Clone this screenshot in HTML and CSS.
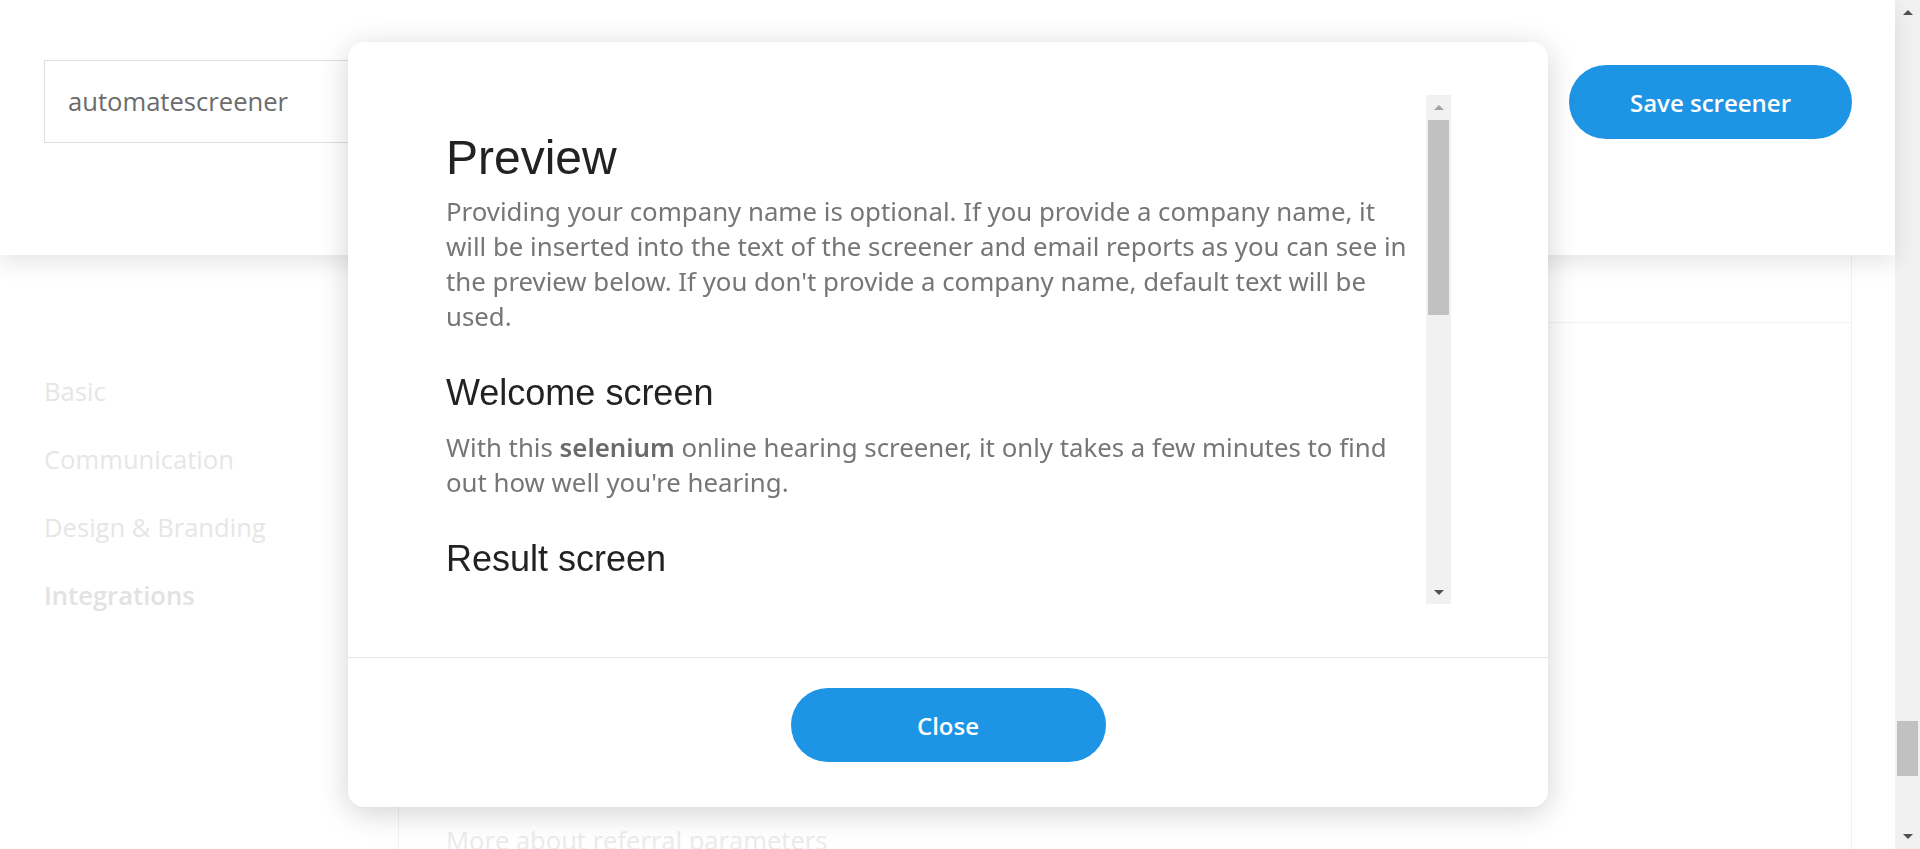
FILE: index.html
```html
<!DOCTYPE html>
<html lang="en">
<head>
<meta charset="utf-8">
<title>Screener settings</title>
<link rel="stylesheet" href="styles.css">
</head>
<body>
<div class="page">
  <div class="main">
    <header class="topbar">
      <div class="name-input">automatescreener</div>
      <button class="btn btn-save" type="button">Save screener</button>
    </header>
    <div class="content">
      <nav class="sidenav">
        <a class="nav-item">Basic</a>
        <a class="nav-item">Communication</a>
        <a class="nav-item">Design &amp; Branding</a>
        <a class="nav-item active">Integrations</a>
      </nav>
      <section class="card">
        <div class="card-head"></div>
        <div class="card-body">
          <a class="more-link">More about referral parameters</a>
        </div>
      </section>
    </div>
  </div>
  <div class="page-scrollbar">
    <div class="sb-btn"><span class="tri-up dark"></span></div>
    <div class="sb-track"><div class="page-thumb"></div></div>
    <div class="sb-btn"><span class="tri-down dark"></span></div>
  </div>
</div>

<div class="modal">
  <div class="modal-body">
    <div class="scroll-box">
      <div class="scroll-content">
        <h1 class="title">Preview</h1>
        <p class="text">Providing your company name is optional. If you provide a company name, it<br>will be inserted into the text of the screener and email reports as you can see in<br>the preview below. If you don't provide a company name, default text will be<br>used.</p>
        <h2 class="subtitle">Welcome screen</h2>
        <p class="text">With this <strong>selenium</strong> online hearing screener, it only takes a few minutes to find<br>out how well you're hearing.</p>
        <h2 class="subtitle">Result screen</h2>
      </div>
      <div class="modal-scrollbar">
        <div class="msb-btn"><span class="tri-up light"></span></div>
        <div class="msb-track"><div class="modal-thumb"></div></div>
        <div class="msb-btn"><span class="tri-down dark"></span></div>
      </div>
    </div>
  </div>
  <div class="modal-footer">
    <button class="btn btn-close" type="button">Close</button>
  </div>
</div>
</body>
</html>
```

FILE: styles.css
```css
html, body {
  margin: 0;
  height: 100%;
  overflow: hidden;
  background: #ffffff;
  font-family: "Open Sans", "Noto Sans", sans-serif;
}

.page {
  display: flex;
  height: 849px;
}

.main {
  flex: 1;
  display: flex;
  flex-direction: column;
  min-width: 0;
}

/* ---------- header ---------- */
.topbar {
  position: relative;
  z-index: 1;
  height: 255px;
  box-sizing: border-box;
  display: flex;
  align-items: flex-start;
  gap: 60px;
  padding: 60px 43px 0 44px;
  background: #ffffff;
  box-shadow: 0 8px 22px rgba(0, 0, 0, 0.10);
}

.name-input {
  flex: 1;
  height: 83px;
  box-sizing: border-box;
  display: flex;
  align-items: center;
  padding: 0 23px;
  border: 1px solid #dddddd;
  font-size: 25.6px;
  color: #6b6b6b;
}

.btn {
  border: 0;
  border-radius: 40px;
  background: #1e94e5;
  color: #ffffff;
  font-family: "Open Sans", "Noto Sans", sans-serif;
  font-weight: 600;
  font-size: 24px;
  cursor: pointer;
}

.btn-save {
  width: 283px;
  height: 74px;
  margin-top: 5px;
}

/* ---------- content ---------- */
.content {
  flex: 1;
  display: flex;
  min-height: 0;
}

.sidenav {
  width: 398px;
  flex: none;
  box-sizing: border-box;
  padding: 120px 0 0 44px;
  display: flex;
  flex-direction: column;
  gap: 34px;
}

.nav-item {
  font-size: 25.6px;
  line-height: 34px;
  color: #e6e6e6;
}

.nav-item.active {
  font-weight: 600;
  color: #e2e2e2;
}

.card {
  flex: 1;
  margin-right: 43px;
  border-left: 1px solid #f1f1f1;
  border-right: 1px solid #f1f1f1;
  display: flex;
  flex-direction: column;
}

.card-head {
  height: 67px;
  flex: none;
  border-bottom: 1px solid #f3f3f3;
}

.card-body {
  padding: 501px 0 0 47px;
}

.more-link {
  display: block;
  font-size: 25.6px;
  line-height: 34px;
  color: #ebebeb;
  white-space: nowrap;
}

/* ---------- page scrollbar ---------- */
.page-scrollbar {
  width: 25px;
  flex: none;
  background: #f1f1f1;
  display: flex;
  flex-direction: column;
}

.sb-btn {
  height: 25px;
  flex: none;
  display: flex;
  align-items: center;
  justify-content: center;
}

.sb-track {
  flex: 1;
  display: flex;
  flex-direction: column;
  align-items: center;
}

.page-thumb {
  margin-top: 696px;
  width: 21px;
  height: 55px;
  background: #c1c1c1;
}

.tri-up,
.tri-down {
  width: 0;
  height: 0;
  border-left: 5px solid transparent;
  border-right: 5px solid transparent;
}

.tri-up { border-bottom: 5px solid #505050; }
.tri-down { border-top: 5px solid #505050; }
.tri-up.light { border-bottom-color: #a3a3a3; }

/* ---------- modal ---------- */
.modal {
  position: fixed;
  left: 348px;
  top: 42px;
  width: 1200px;
  height: 765px;
  z-index: 10;
  background: #ffffff;
  border-radius: 16px;
  box-shadow: 0 6px 30px rgba(0, 0, 0, 0.18);
  display: flex;
  flex-direction: column;
  overflow: hidden;
}

.modal-body {
  padding: 53px 97px 53px 98px;
  border-bottom: 1px solid #e6e6e6;
}

.scroll-box {
  height: 509px;
  display: flex;
}

.scroll-content {
  flex: 1;
  min-width: 0;
  overflow: hidden;
  padding-top: 35px;
}

.title {
  margin: 0 0 8px;
  font-family: "Liberation Sans", Arial, sans-serif;
  font-weight: 400;
  font-size: 48px;
  line-height: 56px;
  color: #222222;
}

.subtitle {
  margin: 38px 0 16px;
  font-family: "Liberation Sans", Arial, sans-serif;
  font-weight: 400;
  font-size: 36px;
  line-height: 42px;
  color: #222222;
}

.text {
  margin: 0;
  font-family: "Noto Sans", "Open Sans", sans-serif;
  font-size: 25.8px;
  line-height: 35px;
  color: #767676;
  white-space: nowrap;
}

.text strong {
  font-weight: 600;
  color: #6a6a6a;
}

.modal-scrollbar {
  width: 25px;
  flex: none;
  background: #f1f1f1;
  display: flex;
  flex-direction: column;
}

.msb-btn {
  height: 24px;
  flex: none;
  display: flex;
  align-items: center;
  justify-content: center;
}

.msb-track {
  flex: 1;
  display: flex;
  flex-direction: column;
  align-items: center;
}

.modal-thumb {
  margin-top: 1px;
  width: 21px;
  height: 195px;
  background: #c1c1c1;
}

.modal-footer {
  flex: 1;
  display: flex;
  justify-content: center;
  align-items: flex-start;
  padding-top: 30px;
}

.btn-close {
  width: 315px;
  height: 74px;
}
```
